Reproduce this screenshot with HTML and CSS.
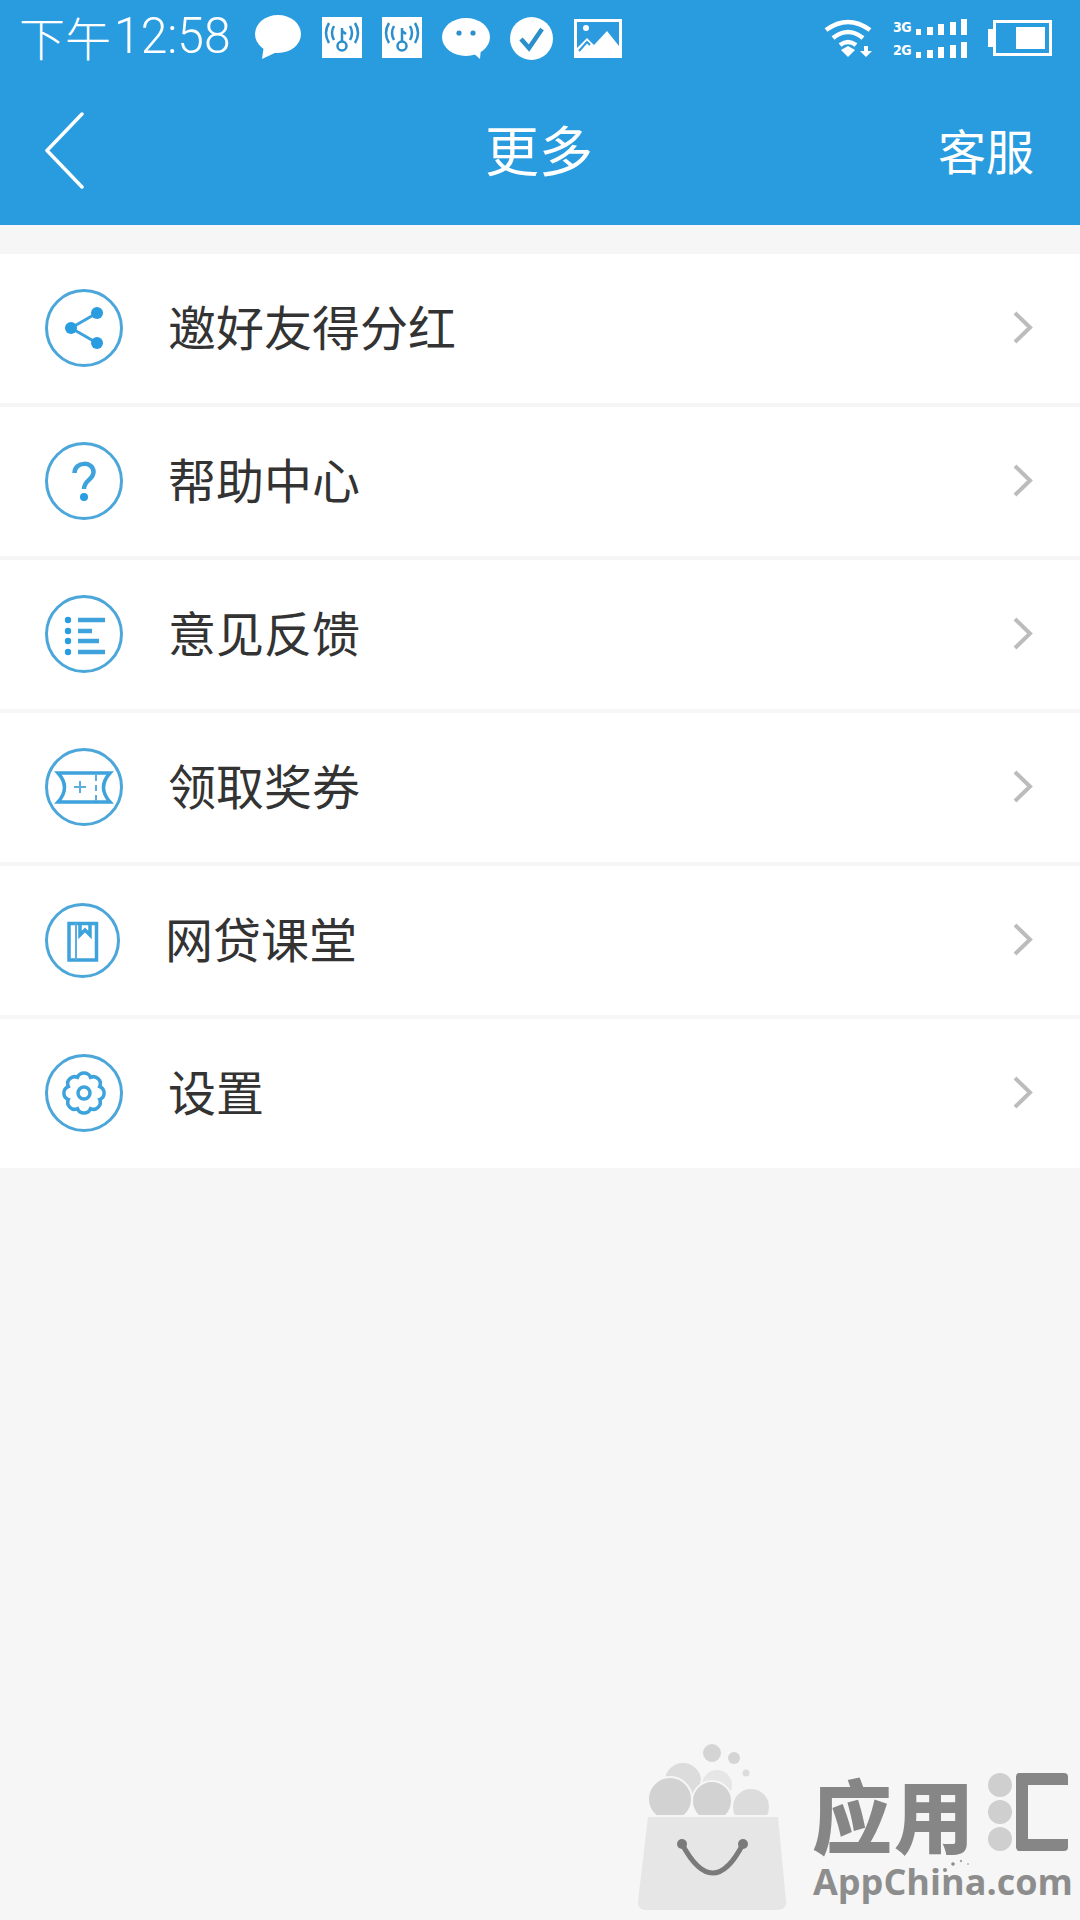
FILE: index.html
```html
<!DOCTYPE html>
<html lang="zh-CN">
<head>
<meta charset="utf-8">
<title>更多</title>
<link rel="stylesheet" href="styles.css">
</head>
<body>
<div class="page">
  <header class="header">
    <div class="status">
      <div class="clock"><span class="clock-cjk">下午</span><span class="clock-num">12:58</span></div>
      <svg class="si si-bubble" width="46" height="44" viewBox="0 0 46 44"><ellipse cx="23" cy="19" rx="23" ry="19" fill="#fff"/><path d="M9 30 L7 44 L24 36Z" fill="#fff"/></svg>
      <svg class="si si-radio" width="40" height="41" viewBox="0 0 40 41"><rect width="40" height="41" fill="#fff"/><g fill="none" stroke="#2b8fcb" stroke-width="2.500"><circle cx="20" cy="29" r="4.500"/><path d="M20 25V11M20 14l4 3M12 9q-4 7 0 14M28 9q4 7 0 14M7 6q-6 10 0 20M33 6q6 10 0 20"/></g></svg>
      <svg class="si si-radio2" width="40" height="41" viewBox="0 0 40 41"><rect width="40" height="41" fill="#fff"/><g fill="none" stroke="#2b8fcb" stroke-width="2.500"><circle cx="20" cy="29" r="4.500"/><path d="M20 25V11M20 14l4 3M12 9q-4 7 0 14M28 9q4 7 0 14M7 6q-6 10 0 20M33 6q6 10 0 20"/></g></svg>
      <svg class="si si-wechat" width="48" height="41" viewBox="0 0 48 41"><ellipse cx="24" cy="19" rx="24" ry="19" fill="#fff"/><path d="M30 34 L38 41 L39 30Z" fill="#fff"/><circle cx="17" cy="15" r="2.600" fill="#2b8fcb"/><circle cx="31" cy="15" r="2.600" fill="#2b8fcb"/></svg>
      <svg class="si si-check" width="43" height="43" viewBox="0 0 43 43"><circle cx="21.500" cy="21.500" r="21.500" fill="#fff"/><path d="M11 22 L19 31 L32 12" fill="none" stroke="#2b8fcb" stroke-width="4.500"/></svg>
      <svg class="si si-image" width="48" height="39" viewBox="0 0 48 39"><rect width="48" height="39" fill="#fff"/><path d="M3 3H45V27L33 12L20 26L13 19L3 29Z" fill="#2b9ade"/><circle cx="12" cy="9" r="3" fill="#fff"/><path d="M5 32 L13 23 L16 26" fill="none" stroke="#2b9ade" stroke-width="2"/></svg>
      <div class="status-spacer"></div>
      <svg class="si si-wifi" width="48" height="38" viewBox="0 0 48 38"><g fill="none" stroke="#fff" stroke-width="4.500"><path d="M2 11Q24 -5 46 11"/><path d="M9 19Q24 7 39 19"/><path d="M16 26Q24 20 32 26"/></g><path d="M17 31L24 27L31 31L24 38Z" fill="#fff"/><path d="M40 27h4v5h4l-6 6l-6-6h4z" fill="#fff"/></svg>
      <div class="signal">
        <div class="signal-row"><span class="signal-net">3G</span><i class="b1"></i><i class="b2"></i><i class="b3"></i><i class="b4"></i><i class="b5"></i></div>
        <div class="signal-row"><span class="signal-net">2G</span><i class="b1"></i><i class="b2"></i><i class="b3"></i><i class="b4"></i><i class="b5"></i></div>
      </div>
      <svg class="si si-battery" width="64" height="36" viewBox="0 0 64 36"><rect x="0" y="9" width="5" height="18" fill="#fff"/><rect x="6.500" y="1.500" width="56" height="33" fill="none" stroke="#fff" stroke-width="3"/><rect x="28" y="7" width="29" height="22" fill="#fff"/></svg>
    </div>
    <nav class="nav">
      <svg class="back" width="41" height="77" viewBox="0 0 41 77"><path d="M38 2 L3 38.500 L38 75" fill="none" stroke="#fff" stroke-width="3.500" stroke-linecap="round" stroke-linejoin="round"/></svg>
      <h1 class="title">更多</h1>
      <a class="service">客服</a>
    </nav>
  </header>

  <ul class="menu">
    <li class="row">
      <svg class="icon" width="78" height="78" viewBox="0 0 78 78"><circle class="ring" cx="39" cy="39" r="37.500"/><path class="line" d="M52 24 L26 39 L52 54"/><circle class="dot" cx="52" cy="24" r="6"/><circle class="dot" cx="26" cy="39" r="6"/><circle class="dot" cx="52" cy="54" r="6"/></svg>
      <span class="label">邀好友得分红</span>
      <svg class="arrow" width="21" height="35" viewBox="0 0 21 35"><path d="M3 3 L18 17.500 L3 32"/></svg>
    </li>
    <li class="row">
      <svg class="icon" width="78" height="78" viewBox="0 0 78 78"><circle class="ring" cx="39" cy="39" r="37.500"/><path class="line thick" d="M29.500 31 C29.500 19 48.500 19 48.500 30 C48.500 38 39 38 39 47"/><circle class="dot" cx="39" cy="55" r="4"/></svg>
      <span class="label">帮助中心</span>
      <svg class="arrow" width="21" height="35" viewBox="0 0 21 35"><path d="M3 3 L18 17.500 L3 32"/></svg>
    </li>
    <li class="row">
      <svg class="icon" width="78" height="78" viewBox="0 0 78 78"><circle class="ring" cx="39" cy="39" r="37.500"/><circle class="dot" cx="23" cy="25" r="3.200"/><circle class="dot" cx="23" cy="36" r="3.200"/><circle class="dot" cx="23" cy="46" r="3.200"/><circle class="dot" cx="23" cy="57" r="3.200"/><path class="line thick" d="M33 25H60M33 36H47M33 46H54M33 57H60"/></svg>
      <span class="label">意见反馈</span>
      <svg class="arrow" width="21" height="35" viewBox="0 0 21 35"><path d="M3 3 L18 17.500 L3 32"/></svg>
    </li>
    <li class="row">
      <svg class="icon" width="78" height="78" viewBox="0 0 78 78"><circle class="ring" cx="39" cy="39" r="37.500"/><path class="line wide" d="M13 25H65Q52 39.500 65 54H13Q26 39.500 13 25Z"/><path class="hair" d="M29 39H41M35 33V45"/><path class="hair dash" d="M51 27V53"/></svg>
      <span class="label">领取奖券</span>
      <svg class="arrow" width="21" height="35" viewBox="0 0 21 35"><path d="M3 3 L18 17.500 L3 32"/></svg>
    </li>
    <li class="row row-book">
      <svg class="icon" width="75" height="75" viewBox="0 0 75 75"><circle class="ring" cx="37.500" cy="37.500" r="36"/><path class="line wide" d="M24 20.500H51.500V57H24Z"/><path class="hair" d="M31 20V57"/><path class="line wide" d="M35 19V32L40 27L45 32V19"/></svg>
      <span class="label">网贷课堂</span>
      <svg class="arrow" width="21" height="35" viewBox="0 0 21 35"><path d="M3 3 L18 17.500 L3 32"/></svg>
    </li>
    <li class="row">
      <svg class="icon" width="78" height="78" viewBox="0 0 78 78"><circle class="ring" cx="39" cy="39" r="37.500"/><path class="line wide" d="M45.500 23.300A7 7 0 0 1 54.700 32.500A7 7 0 0 1 54.700 45.500A7 7 0 0 1 45.500 54.700A7 7 0 0 1 32.500 54.700A7 7 0 0 1 23.300 45.500A7 7 0 0 1 23.300 32.500A7 7 0 0 1 32.500 23.300A7 7 0 0 1 45.500 23.300Z"/><circle class="line wide" cx="39" cy="39" r="6"/></svg>
      <span class="label">设置</span>
      <svg class="arrow" width="21" height="35" viewBox="0 0 21 35"><path d="M3 3 L18 17.500 L3 32"/></svg>
    </li>
  </ul>

  <aside class="watermark">
    <svg class="bag" width="150" height="168" viewBox="0 0 150 168">
      <g stroke="#f6f6f6" stroke-width="2">
        <circle cx="45" cy="38" r="19" fill="#dcdcdc"/>
        <circle cx="79" cy="42" r="16" fill="#e6e6e6"/>
        <circle cx="74" cy="10" r="9" fill="#d4d4d4" stroke="none"/>
        <circle cx="96" cy="15" r="6" fill="#d4d4d4" stroke="none"/>
        <circle cx="108" cy="30" r="3.500" fill="#dcdcdc" stroke="none"/>
        <circle cx="32" cy="56" r="22" fill="#d2d2d2"/>
        <circle cx="74" cy="58" r="20" fill="#d2d2d2"/>
        <circle cx="113" cy="64" r="19" fill="#dcdcdc"/>
      </g>
      <rect x="0" y="72" width="150" height="8" fill="#f6f6f6"/>
      <path d="M10 74H140L148 158Q149 167 139 167H9Q-1 167 0 158Z" fill="#e6e6e6"/>
      <path d="M44 101Q75 159 105 101" fill="none" stroke="#7a7a7a" stroke-width="5"/><circle cx="44" cy="101" r="5" fill="#7a7a7a"/><circle cx="105" cy="101" r="5" fill="#7a7a7a"/>
    </svg>
    <div class="brand">
      <div class="brand-top">
        <span class="brand-cjk">应用</span>
        <span class="brand-dots"><i></i><i></i><i></i></span>
        <span class="brand-c"></span>
      </div>
      <div class="brand-en">AppChina.com<svg class="sparkle" width="28" height="14" viewBox="0 0 28 14"><circle cx="2" cy="12" r="2" fill="#8d8d8d"/><circle cx="10" cy="6" r="1.800" fill="#8d8d8d"/><circle cx="18" cy="3" r="1.200" fill="#a5a5a5"/><circle cx="25" cy="6" r="1" fill="#b5b5b5"/></svg></div>
    </div>
  </aside>
</div>
</body>
</html>
```

FILE: styles.css
```css
* { box-sizing: border-box; }
html, body { margin: 0; padding: 0; }
body { font-family: "Noto Sans CJK SC", "Noto Sans", sans-serif; background: #f6f6f6; }
.page { position: relative; width: 1080px; height: 1920px; overflow: hidden; background: #f6f6f6; }

.header { height: 225px; background: #299bdf; color: #fff; }
.status { display: flex; align-items: center; height: 76px; padding: 0 28px 0 19px; }
.si { flex: none; display: block; }
.clock { display: flex; align-items: center; width: 236px; flex: none; margin-top: -4px; color: #fff; white-space: nowrap; }
.clock-cjk { flex: none; width: 95px; font-size: 46px; line-height: 60px; font-weight: 300; }
.clock-num { flex: none; font-family: Roboto, sans-serif; font-weight: 300; font-size: 50px; line-height: 60px; transform: scaleX(.96); transform-origin: left center; }
.si-radio, .si-radio2, .si-bubble { margin-top: -2px; }
.si-radio { margin-left: 21px; }
.si-radio2 { margin-left: 20px; }
.si-wechat { margin-left: 20px; }
.si-check { margin-left: 20px; }
.si-image { margin-left: 21px; }
.status-spacer { flex: 1; }
.signal { display: flex; flex-direction: column; gap: 7px; margin: 0 21px; flex: none; }
.signal-row { display: flex; align-items: flex-end; gap: 5.5px; height: 16px; width: 74px; }
.signal-net { width: 17px; flex: none; font-family: "DejaVu Sans Condensed", "DejaVu Sans", sans-serif; font-weight: 700; font-size: 14px; letter-spacing: -.5px; line-height: 16px; color: #fff; }
.signal-row i { display: block; width: 6px; background: #fff; }
.signal-row .b1 { height: 6px; }
.signal-row .b2 { height: 8px; }
.signal-row .b3 { height: 11px; }
.signal-row .b4 { height: 13px; }
.signal-row .b5 { height: 16px; }

.nav { display: grid; grid-template-columns: 1fr auto 1fr; align-items: center; height: 149px; padding: 0 46px 0 44px; }
.back { display: block; margin-top: -1px; }
.title { margin: -3px 0 0; font-size: 54px; font-weight: 400; line-height: 1; }
.service { justify-self: end; font-size: 48px; line-height: 1; margin-top: -3px; }

.menu { list-style: none; margin: 29px 0 0; padding: 0; display: flex; flex-direction: column; gap: 4px; }
.row { display: flex; align-items: center; height: 149px; background: #fff; padding: 0 47px 0 45px; }
.icon { flex: none; display: block; margin-top: -1px; }
.label { flex: 1; margin-left: 45px; padding-bottom: 8px; font-size: 48px; line-height: 1; color: #333; }
.arrow { flex: none; display: block; margin-top: -2px; }
.arrow path { fill: none; stroke: #bcbcbc; stroke-width: 4; }
.ring { fill: none; stroke: #4ba6da; stroke-width: 3; }
.dot { fill: #2a9ce0; }
.line { fill: none; stroke: #3ea3dc; stroke-width: 3; }
.line.wide { stroke-width: 3.500; }
.line.thick { stroke-width: 4.500; }
.hair { fill: none; stroke: #5aaddc; stroke-width: 2; }
.hair.dash { stroke-dasharray: 6 4; }

.watermark { position: absolute; left: 638px; top: 1743px; display: flex; gap: 24px; }
.bag { display: block; flex: none; }
.brand { margin-top: 29px; width: 258px; }
.brand-top { display: flex; align-items: center; height: 80px; }
.brand-cjk { font-size: 80px; line-height: 80px; font-weight: 900; color: #868686; letter-spacing: 2px; width: 176px; flex: none; }
.brand-dots { display: flex; flex-direction: column; gap: 3px; flex: none; }
.brand-dots i { display: block; width: 24px; height: 24px; border-radius: 50%; background: #cfcfcf; }
.brand-c { width: 52px; height: 78px; margin-left: 4px; border: 12px solid #868686; border-right: 0; border-radius: 4px; flex: none; }
.brand-en { position: relative; margin-top: 9px; margin-left: 1px; font-family: "Open Sans", sans-serif; font-weight: 700; font-size: 36px; line-height: 42px; color: #8d8d8d; white-space: nowrap; }
.sparkle { position: absolute; left: 130px; top: -3px; }
```
